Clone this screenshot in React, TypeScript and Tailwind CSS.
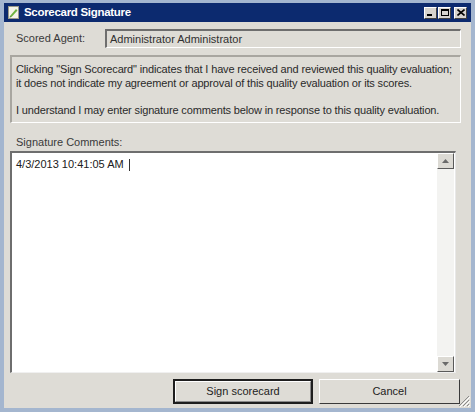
import React from "react";

const font = { fontFamily: '"Liberation Sans", Arial, sans-serif' };

function TitleButton({ children }: { children: React.ReactNode }) {
  return (
    <div className="w-[13px] h-[12px] bg-[#d6d3ce] border-t border-l border-t-white border-l-white border-r border-b border-r-[#404040] border-b-[#404040] flex items-center justify-center">
      {children}
    </div>
  );
}

function ScrollArrow({ up }: { up?: boolean }) {
  return (
    <div className="w-[17px] h-[16px] bg-[#dcdad4] border border-t-white border-l-white border-r-[#5a5a5a] border-b-[#5a5a5a] flex items-center justify-center">
      <svg width="7" height="4" viewBox="0 0 7 4">
        {up ? (
          <path d="M0 4 L3.5 0 L7 4 Z" fill="#6a6a6a" />
        ) : (
          <path d="M0 0 L3.5 4 L7 0 Z" fill="#6a6a6a" />
        )}
      </svg>
    </div>
  );
}

export default function App() {
  return (
    <div
      className="w-[475px] h-[412px] bg-[#a4b6cf] pt-[3px] px-[4px] pb-[4px] flex flex-col overflow-hidden"
      style={font}
    >
      {/* title bar */}
      <div className="h-[19px] bg-[#0c2a6f] flex items-center pl-[4px] pr-[4px]">
        <svg width="12" height="13" viewBox="0 0 12 13" className="mr-[4px]">
          <rect x="0.5" y="0.5" width="10" height="12" fill="#f4f4e8" stroke="#9a9a8a" />
          <path d="M2 10 L8 3 L9.5 4.5 L3.5 11 Z" fill="#6db33f" />
          <path d="M2 10 L3.5 11 L1.5 11.5 Z" fill="#2f6e1a" />
        </svg>
        <span className="text-white font-bold text-[11.5px] tracking-[-0.3px]">Scorecard Signature</span>
        <div className="ml-auto flex items-center gap-[1px]">
          <TitleButton>
            <div className="w-[5px] h-[2px] bg-black mt-[5px] -ml-[2px]" />
          </TitleButton>
          <TitleButton>
            <div className="w-[8px] h-[7px] border border-black border-t-2" />
          </TitleButton>
          <div className="ml-[2px]">
            <TitleButton>
              <svg width="8" height="7" viewBox="0 0 8 7">
                <path d="M0.5 0.5 L7.5 6.5 M7.5 0.5 L0.5 6.5" stroke="black" strokeWidth="1.6" />
              </svg>
            </TitleButton>
          </div>
        </div>
      </div>

      {/* body */}
      <div className="relative flex-1 bg-[#dedcd6] flex flex-col text-[11px] text-[#2a2a2a]">
        <div className="flex items-center mt-[7px] h-[19px]">
          <span className="w-[101px] pl-[12px] text-[#3a3a3a]">Scored Agent:</span>
          <div className="w-[356px] h-[19px] border-t-2 border-l-2 border-t-[#6e6e6e] border-l-[#6e6e6e] border-b border-r border-b-white border-r-white flex items-center pl-[3px] text-[#303030]">
            Administrator Administrator
          </div>
        </div>

        <div className="ml-[6px] mt-[7px] w-[451px] h-[68px] border-t-2 border-l-2 border-t-[#a8a6a0] border-l-[#a8a6a0] border-b border-r border-b-white border-r-white pt-[6px] pl-[4px] leading-[13.5px] tracking-[-0.15px]">
          <div>Clicking "Sign Scorecard" indicates that I have received and reviewed this quality evaluation;</div>
          <div>it does not indicate my agreement or approval of this quality evaluation or its scores.</div>
          <div className="mt-[13.5px]">I understand I may enter signature comments below in response to this quality evaluation.</div>
        </div>

        <div className="mt-[12px] pl-[12px] h-[14px] leading-[14px] text-[#3a3a3a]">Signature Comments:</div>

        <div className="ml-[6px] mt-[2px] w-[446px] h-[222px] bg-white border-t-2 border-l-2 border-t-[#6e6e6e] border-l-[#6e6e6e] border-b border-r border-b-[#f0f0f0] border-r-[#e8e8e8] flex">
          <div className="flex-1 pl-[4px] pt-[4px] leading-[14px] text-[#202020]">
            4/3/2013 10:41:05 AM <span className="inline-block w-[1px] h-[12px] bg-[#333] align-middle ml-[2px]" />
          </div>
          <div className="w-[17px] bg-[#f3f3f1] flex flex-col justify-between mr-[1px]">
            <ScrollArrow up />
            <ScrollArrow />
          </div>
        </div>

        <div className="mt-[6px] flex pl-[169px] gap-[6px]">
          <button className="w-[140px] h-[25px] bg-[#dedcd6] border-2 border-[#1e1e1e] flex items-center justify-center text-[11px] text-[#222]">
            <span className="w-[136px] h-[21px] border border-t-white border-l-white border-r-[#8a8a8a] border-b-[#8a8a8a] flex items-center justify-center">
              Sign scorecard
            </span>
          </button>
          <button className="w-[141px] h-[25px] bg-[#dedcd6] border border-t-white border-l-white border-r-[#3a3a3a] border-b-[#3a3a3a] flex items-center justify-center text-[11px] text-[#222]">
            Cancel
          </button>
        </div>

        {/* resize grip */}
        <svg width="12" height="12" viewBox="0 0 12 12" className="absolute right-[1px] bottom-[1px]">
          <path d="M11 1 L1 11 M11 5 L5 11 M11 9 L9 11" stroke="#8a8a8a" strokeWidth="1" />
          <path d="M12 2 L2 12 M12 6 L6 12 M12 10 L10 12" stroke="#ffffff" strokeWidth="1" />
        </svg>
      </div>
    </div>
  );
}
